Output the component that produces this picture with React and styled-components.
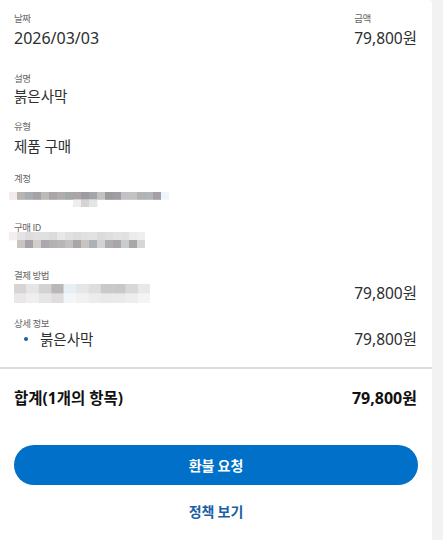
import React from "react";
import styled, { createGlobalStyle } from "styled-components";

const Global = createGlobalStyle`
  html, body { margin: 0; padding: 0; background: #f2f2f2; }
  body { font-family: "Noto Sans", "Noto Sans CJK KR", sans-serif; color: #222; }
`;

const Page = styled.div`
  width: 443px;
  height: 540px;
  display: flex;
  background: #f2f2f2;
`;

const Card = styled.div`
  width: 432px;
  height: 540px;
  background: #fff;
  border-top-right-radius: 4px;
  display: flex;
  flex-direction: column;
`;

const Details = styled.div`
  padding: 11px 15px 0 14px;
  display: flex;
  flex-direction: column;
`;

const Section = styled.div`
  display: flex;
  justify-content: space-between;
  margin-top: ${(p) => p.$top || 0}px;
`;

const Field = styled.div`
  display: flex;
  flex-direction: column;
  flex: ${(p) => (p.$grow ? 1 : "none")};
`;

const Label = styled.div`
  font-size: 9.5px;
  line-height: 14px;
  letter-spacing: -0.4px;
  color: #666;
  font-family: "Noto Sans CJK KR", sans-serif;
`;

const Value = styled.div`
  font-size: ${(p) => p.$size || 15.5}px;
  line-height: ${(p) => p.$lh || 22}px;
  margin-top: ${(p) => p.$gap || 0}px;
  color: #2c2e2f;
  font-family: "Noto Sans", "Noto Sans CJK KR", sans-serif;
  display: flex;
  align-items: center;
  white-space: nowrap;
`;

const Row = styled.div`
  display: flex;
  justify-content: space-between;
  align-items: center;
  margin-top: ${(p) => p.$gap || 0}px;
`;

const Bullet = styled.span`
  width: 4px;
  height: 4px;
  border-radius: 50%;
  background: #1d5fa6;
  margin: 0 12px 0 10px;
`;

const Divider = styled.div`
  height: 2px;
  background: #dcdcdc;
  margin-top: 19px;
`;

const Total = styled.div`
  display: flex;
  justify-content: space-between;
  align-items: center;
  padding: 0 15px 0 14px;
  height: 56px;
  font-weight: 700;
  color: #111;
  font-family: "Noto Sans", "Noto Sans CJK KR", sans-serif;
`;

const TotalText = styled.span`
  font-size: ${(p) => p.$size}px;
`;

const Actions = styled.div`
  padding: 20px 14px 0 14px;
  display: flex;
  flex-direction: column;
  align-items: center;
`;

const PrimaryButton = styled.button`
  width: 404px;
  height: 40px;
  border: none;
  border-radius: 20px;
  background: #0070c9;
  color: #fff;
  font-size: 14px;
  font-weight: 700;
  font-family: "Noto Sans CJK KR", sans-serif;
  cursor: pointer;
`;

const LinkButton = styled.button`
  margin-top: 17px;
  border: none;
  background: none;
  color: #1a5fa6;
  font-size: 14px;
  line-height: 18px;
  font-weight: 700;
  font-family: "Noto Sans CJK KR", sans-serif;
  cursor: pointer;
  padding: 0;
`;

const MosaicWrap = styled.div`
  display: flex;
  margin-left: ${(p) => p.$left || 0}px;
  margin-top: ${(p) => p.$top || 0}px;
`;

function Mosaic({ cells, w = 8, h = 8, cols }) {
  return (
    <svg width={cols * w} height={cells.length * h} style={{ display: "block" }}>
      {cells.map((row, r) =>
        row.map((c, i) =>
          c ? <rect key={r + "-" + i} x={i * w} y={r * h} width={w + 0.3} height={h + 0.3} fill={c} /> : null
        )
      )}
    </svg>
  );
}

const acct = [
  ["#f1ebe9", "#b9b4b2", "#a9adb3", "#a6a3a5", "#bdb9b6", "#a9a4a7", "#b3abb0", "#a6a9a8", "#aba4a9", "#9f9aa0", "#a4a5ab", "#c4c2c0", "#9d9a9f", "#a19ca0", "#c2c1c5", "#c4c2c2", "#b5b2b3", "#b3b5b8", "#a59fa3", "#eef5fb"],
  [null, null, null, null, null, null, null, null, "#eeedf0", "#d6d3d4", "#e5e5e7", null, null, null, null, null, null, null, null, null],
];
const pid = [
  ["#f2eeee", "#e4e2e2", "#dedcdc", "#e1dfdf", "#e1e0e0", "#dcdbdb", "#e8e8e8", "#e2e1e1", "#dddcdd", "#e2e0e0", "#e2e2e6", "#dcdbdc", "#e0dcdf", "#e4e3e3", "#e2e1e2", "#ebebeb", "#eeeeee"],
  [null, "#c9c3c2", "#a4a3ab", "#d3cdc9", "#aba7ad", "#b3b1b3", "#b7b5b6", "#c1bfc1", "#a9a6a8", "#c8c4bf", "#acb0b8", "#d3d1d1", "#aeabb1", "#aaa5ab", "#c9ccca", "#a9a7a8", "#d7d5d5"],
];
const pay = [
  ["#d8d4d4", "#e6e4e4", "#d2d2d2", "#b9b7b8", "#e6f0f4", "#e7e6e6", "#dedede", "#c9c9c9", "#c8c8c8", "#d8d8d8", "#e8e8e8"],
  ["#e9e7e7", "#efefef", "#e7e5e6", "#dfdddd", "#f3f6f8", "#f1f1f1", "#ececec", "#e9e9e9", "#eaeaea", "#eeeeee", "#f4f4f4"],
];

export default function App() {
  return (
    <>
      <Global />
      <Page>
        <Card>
          <Details>
            <Section>
              <Field>
                <Label>날짜</Label>
                <Value $size={16} $gap={2}>2026/03/03</Value>
              </Field>
              <Field>
                <Label>금액</Label>
                <Value $gap={2}>79,800원</Value>
              </Field>
            </Section>
            <Section $top={22}>
              <Field>
                <Label>설명</Label>
                <Value $size={14.5}>붉은사막</Value>
              </Field>
            </Section>
            <Section $top={12}>
              <Field>
                <Label>유형</Label>
                <Value $size={14.5} $gap={2}>제품 구매</Value>
              </Field>
            </Section>
            <Section $top={14}>
              <Field>
                <Label>계정</Label>
                <MosaicWrap $left={-5} $top={7}>
                  <Mosaic cells={acct} cols={20} h={7.5} />
                </MosaicWrap>
              </Field>
            </Section>
            <Section $top={13}>
              <Field>
                <Label>구매 ID</Label>
                <MosaicWrap $left={-5} $top={-2}>
                  <Mosaic cells={pid} cols={17} />
                </MosaicWrap>
              </Field>
            </Section>
            <Section $top={20}>
              <Field $grow>
                <Label>결제 방법</Label>
                <Row $gap={2}>
                  <Mosaic cells={pay} cols={11} w={12.4} h={9.5} />
                  <Value $lh={19}>79,800원</Value>
                </Row>
              </Field>
            </Section>
            <Section $top={13}>
              <Field $grow>
                <Label>상세 정보</Label>
                <Row>
                  <Value $size={14.5} $lh={18}>
                    <Bullet />
                    붉은사막
                  </Value>
                  <Value $lh={18}>79,800원</Value>
                </Row>
              </Field>
            </Section>
          </Details>
          <Divider />
          <Total>
            <TotalText $size={15.5}>합계(1개의 항목)</TotalText>
            <TotalText $size={16}>79,800원</TotalText>
          </Total>
          <Actions>
            <PrimaryButton>환불 요청</PrimaryButton>
            <LinkButton>정책 보기</LinkButton>
          </Actions>
        </Card>
      </Page>
    </>
  );
}
